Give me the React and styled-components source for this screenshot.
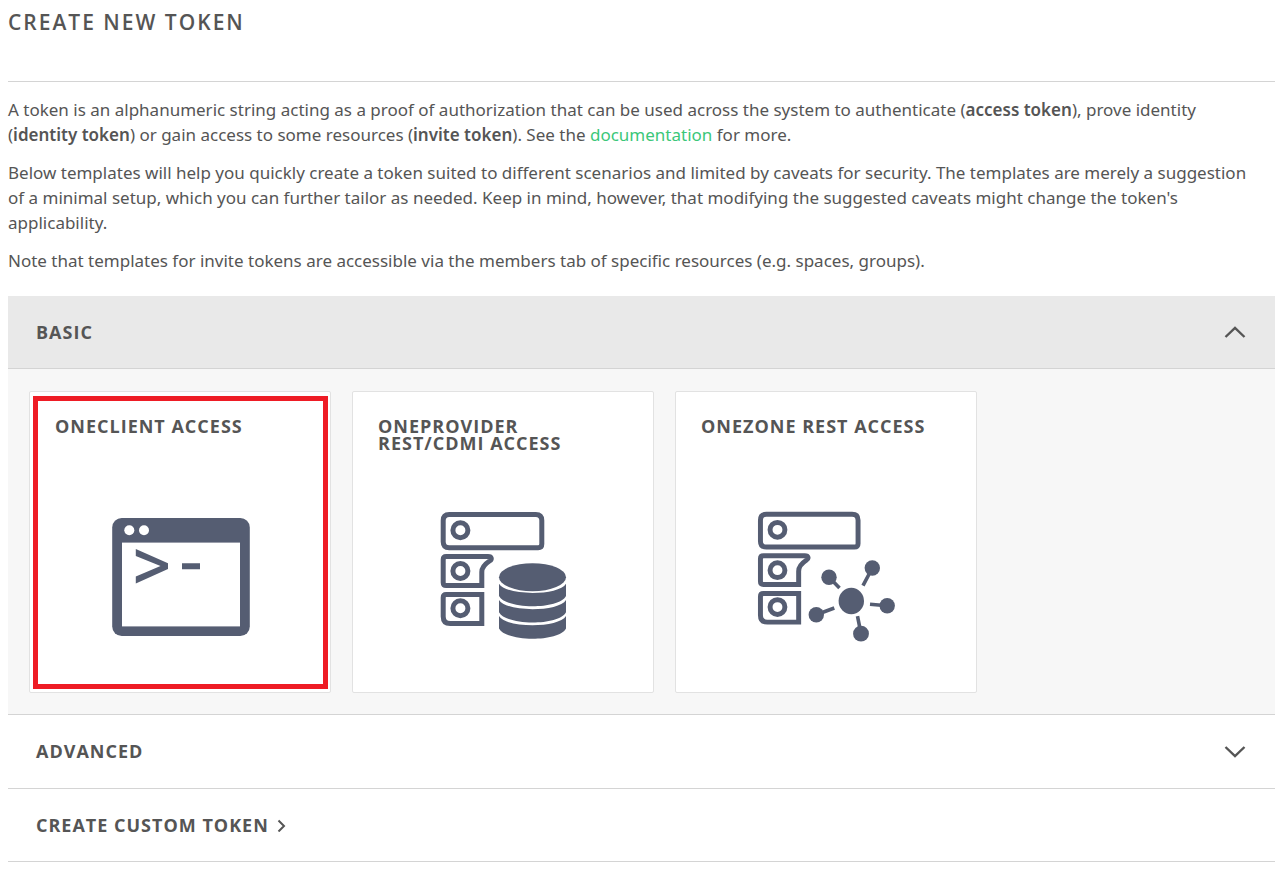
import React, { useState } from "react";
import styled, { createGlobalStyle, css } from "styled-components";

const GlobalStyle = createGlobalStyle`
  * { box-sizing: border-box; }
  body {
    margin: 0;
    background: #fff;
    color: #555;
    font-family: "Open Sans", "Noto Sans", sans-serif;
    font-size: 18px;
    line-height: 25px;
  }
`;

const Page = styled.main`
  padding: 0 13px 12px 8px;
`;

const PageHeader = styled.header`
  height: 82px;
  padding-top: 7px;
  border-bottom: 1px solid #d4d4d4;
`;

const PageTitle = styled.h1`
  margin: 0;
  font-size: 21px;
  line-height: 30px;
  font-weight: 600;
  letter-spacing: 2px;
  text-transform: uppercase;
`;

const Intro = styled.div`
  display: flex;
  flex-direction: column;
  gap: 13px;
  padding: 15px 12px 23px 0;
  font-family: "Noto Sans", "Open Sans", sans-serif;
  font-size: 17px;
`;

const Paragraph = styled.p`
  margin: 0;
`;

const Term = styled.strong`
  font-weight: 600;
`;

const DocLink = styled.a`
  color: #3bc779;
  text-decoration: none;
`;

const Section = styled.section`
  border-bottom: 1px solid #d4d4d4;
`;

const SectionHeading = styled.h2`
  margin: 0;
  font-size: 18px;
`;

const SectionToggle = styled.button`
  display: flex;
  align-items: center;
  justify-content: ${(p) => (p.$inline ? "flex-start" : "space-between")};
  gap: 8px;
  width: 100%;
  height: ${(p) => (p.$inline ? 72 : 73)}px;
  padding: 0 29px 0 28px;
  border: 0;
  background: transparent;
  color: #555;
  font: inherit;
  font-weight: 700;
  letter-spacing: 1px;
  text-transform: uppercase;
  cursor: pointer;
  ${(p) =>
    p.$open &&
    css`
      background: #e9e9e9;
      border-bottom: 1px solid #d4d4d4;
    `}
`;

const TemplateList = styled.div`
  display: flex;
  flex-wrap: wrap;
  gap: 21px;
  padding: 22px 21px 21px;
  background: #f7f7f7;
`;

const TemplateCard = styled.button`
  position: relative;
  display: flex;
  flex-direction: column;
  align-items: center;
  justify-content: space-between;
  width: 302px;
  height: 302px;
  padding: 26px 0 45px;
  border: 1px solid #e2e2e2;
  border-radius: 2px;
  background: #fff;
  color: #555;
  font: inherit;
  cursor: pointer;
  ${(p) =>
    p.$highlighted &&
    css`
      &::after {
        content: "";
        position: absolute;
        inset: 4px 2px 3px 3px;
        border: 5px solid #ee1c25;
      }
    `}
`;

const TemplateTitle = styled.span`
  align-self: stretch;
  padding: 0 25px;
  font-weight: 700;
  line-height: 17px;
  letter-spacing: 1px;
  text-align: left;
  text-transform: uppercase;
`;

const Artwork = styled.svg`
  display: block;
  width: 150px;
  height: 140px;
  color: #555d72;
`;

const Chevron = styled.svg`
  display: block;
  flex: none;
  fill: none;
  stroke: currentColor;
  stroke-width: ${(p) => (p.$thin ? 2 : 2.4)};
`;

function ChevronUp() {
  return (
    <Chevron width="22" height="12" viewBox="0 0 22 12" aria-hidden="true">
      <path d="M1.500 11 11 2l9.500 9" />
    </Chevron>
  );
}

function ChevronDown() {
  return (
    <Chevron width="22" height="12" viewBox="0 0 22 12" aria-hidden="true">
      <path d="M1.500 1 11 10l9.500-9" />
    </Chevron>
  );
}

function ChevronRight() {
  return (
    <Chevron $thin width="9" height="14" viewBox="0 0 9 14" aria-hidden="true">
      <path d="M1.500 2.500 7 8l-5.500 5.500" />
    </Chevron>
  );
}

function TerminalArt() {
  return (
    <Artwork viewBox="0 0 150 140" aria-hidden="true">
      <rect x="7.200" y="11" width="137.600" height="118" rx="9.500" fill="currentColor" />
      <rect x="17" y="35.600" width="118" height="83.800" fill="#fff" />
      <circle cx="24.300" cy="23.300" r="5" fill="#fff" />
      <circle cx="39" cy="23.300" r="5" fill="#fff" />
      <path
        d="M30.800 42 63 56.300v5.600L30.800 76.400v-6.800L55.500 59.100 30.800 48.900zM77 56.200h18v6H77z"
        fill="currentColor"
      />
    </Artwork>
  );
}

function ServerShapes(props) {
  return (
    <g fill="none" stroke="currentColor" strokeWidth="5" {...props}>
      <path d="M21.200 7.500h86.600q6 0 6 6v23.500q0 3.700-3.700 3.700H21.200q-6 0-6-6V13.500q0-6 6-6z" />
      <path d="M53.800 78.500H18.200q-3 0-3-3V52.500q0-3 3-3H60c3.800 0 4.300 2.700 1.500 4.500-5 3.300-7.700 6.200-7.700 11z" />
      <path d="M53.800 87.500H18.200q-3 0-3 3v19q0 7 7 7h31.600z" />
      <circle cx="32.400" cy="23.300" r="7.500" />
      <circle cx="32.400" cy="64" r="7.500" />
      <circle cx="32.400" cy="101.300" r="7.500" />
    </g>
  );
}

function ServerDatabaseArt() {
  const band = "M71 76.700C78 89 131 89 138 76.700V89C131 102.700 78 102.700 71 89z";
  return (
    <Artwork viewBox="0 0 150 140" aria-hidden="true">
      <ServerShapes />
      <g fill="currentColor">
        <ellipse cx="104.500" cy="70.200" rx="33.500" ry="14" />
        <path d={band} />
        <path d={band} transform="translate(0 16.200)" />
        <path d={band} transform="translate(0 32.400)" />
      </g>
    </Artwork>
  );
}

function ServerNetworkArt() {
  return (
    <Artwork viewBox="0 0 150 140" aria-hidden="true">
      <ServerShapes transform="translate(-5.600 -.2) scale(.99)" />
      <path
        d="M78 70.300 88.500 81M121.300 61 112 78.700M136 98.700l-17-1.400M110 126.700l-3.500-17.500M65.300 107.700l18-6.700"
        fill="none"
        stroke="currentColor"
        strokeWidth="3.600"
      />
      <g fill="currentColor">
        <ellipse cx="100.300" cy="94" rx="12.700" ry="13.200" />
        <circle cx="78" cy="70.300" r="7.700" />
        <circle cx="121.300" cy="61" r="7.700" />
        <circle cx="136.200" cy="98.700" r="7.700" />
        <circle cx="110" cy="126.700" r="7.900" />
        <circle cx="65.300" cy="107.700" r="7.700" />
      </g>
    </Artwork>
  );
}

const templates = [
  { title: "Oneclient access", Art: TerminalArt, highlighted: true },
  { title: "Oneprovider REST/CDMI access", Art: ServerDatabaseArt },
  { title: "Onezone REST access", Art: ServerNetworkArt },
];

export default function App() {
  const [basicOpen, setBasicOpen] = useState(true);

  return (
    <>
      <GlobalStyle />
      <Page>
        <PageHeader>
          <PageTitle>Create new token</PageTitle>
        </PageHeader>
        <Intro>
          <Paragraph>
            A token is an alphanumeric string acting as a proof of authorization that can be used
            across the system to authenticate (<Term>access token</Term>), prove identity (
            <Term>identity token</Term>) or gain access to some resources (
            <Term>invite token</Term>). See the <DocLink href="#documentation">documentation</DocLink>{" "}
            for more.
          </Paragraph>
          <Paragraph>
            Below templates will help you quickly create a token suited to different scenarios and
            limited by caveats for security. The templates are merely a suggestion of a minimal
            setup, which you can further tailor as needed. Keep in mind, however, that modifying the
            suggested caveats might change the token's applicability.
          </Paragraph>
          <Paragraph>
            Note that templates for invite tokens are accessible via the members tab of specific
            resources (e.g. spaces, groups).
          </Paragraph>
        </Intro>
        <Section>
          <SectionHeading>
            <SectionToggle
              type="button"
              $open={basicOpen}
              aria-expanded={basicOpen}
              onClick={() => setBasicOpen(!basicOpen)}
            >
              Basic
              {basicOpen ? <ChevronUp /> : <ChevronDown />}
            </SectionToggle>
          </SectionHeading>
          {basicOpen && (
            <TemplateList>
              {templates.map(({ title, Art, highlighted }) => (
                <TemplateCard key={title} type="button" $highlighted={highlighted}>
                  <TemplateTitle>{title}</TemplateTitle>
                  <Art />
                </TemplateCard>
              ))}
            </TemplateList>
          )}
        </Section>
        <Section>
          <SectionHeading>
            <SectionToggle type="button" aria-expanded={false}>
              Advanced
              <ChevronDown />
            </SectionToggle>
          </SectionHeading>
        </Section>
        <Section>
          <SectionHeading>
            <SectionToggle type="button" $inline>
              Create custom token
              <ChevronRight />
            </SectionToggle>
          </SectionHeading>
        </Section>
      </Page>
    </>
  );
}
